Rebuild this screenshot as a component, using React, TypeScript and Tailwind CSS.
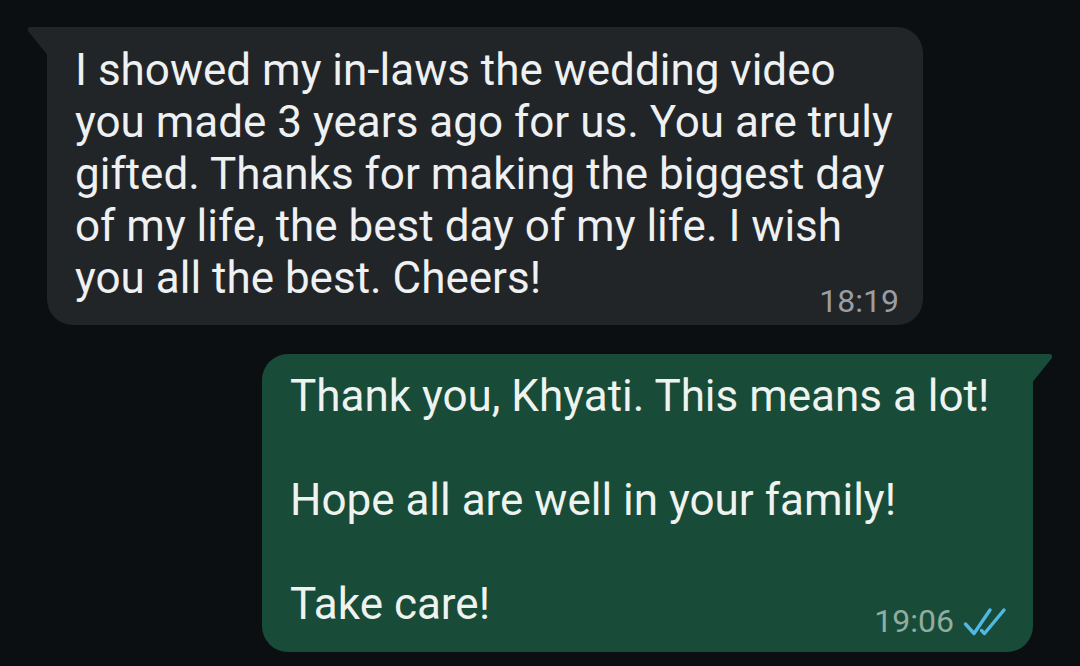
import React from "react";

const font = { fontFamily: "Roboto, 'Noto Sans', sans-serif" };

export default function App() {
  return (
    <div
      className="w-[1080px] h-[666px] bg-[#0b0f12] flex flex-col overflow-hidden"
      style={font}
    >
      {/* Incoming */}
      <div className="relative mt-[27px] ml-[47px] w-[876px]">
        <svg
          className="absolute left-[-20px] top-0"
          width="22"
          height="30"
          viewBox="0 0 22 30"
        >
          <path d="M4 0 H22 V30 L1.5 4.5 Q-0.5 0 4 0 Z" fill="#222528" />
        </svg>
        <div className="bg-[#222528] rounded-tr-[26px] rounded-br-[26px] rounded-bl-[26px] pl-[28px] pr-[24px] pt-[17px] pb-[8px] flex flex-col">
          <div className="text-[44px] leading-[52px] text-[#eef0f1] whitespace-nowrap">
            <div>I showed my in-laws the wedding video</div>
            <div>you made 3 years ago for us. You are truly</div>
            <div>gifted. Thanks for making the biggest day</div>
            <div>of my life, the best day of my life. I wish</div>
            <div>you all the best. Cheers!</div>
          </div>
          <div className="self-end -mt-[19px] text-[32px] leading-[32px] text-[#9a9ea2]">
            18:19
          </div>
        </div>
      </div>

      {/* Outgoing */}
      <div className="relative mt-[29px] ml-[262px] w-[771px]">
        <svg
          className="absolute right-[-20px] top-0"
          width="22"
          height="30"
          viewBox="0 0 22 30"
        >
          <path d="M18 0 H0 V30 L20.5 4.5 Q22.5 0 18 0 Z" fill="#184c39" />
        </svg>
        <div className="bg-[#184c39] rounded-tl-[26px] rounded-bl-[26px] rounded-br-[26px] pl-[28px] pr-[24px] pt-[16px] pb-[15px] flex flex-col">
          <div className="text-[44px] leading-[52px] text-[#eef3f0] whitespace-nowrap">
            <div>Thank you, Khyati. This means a lot!</div>
            <div>&nbsp;</div>
            <div>Hope all are well in your family!</div>
            <div>&nbsp;</div>
            <div>Take care!</div>
          </div>
          <div className="self-end -mt-[25px] mr-[-2px] flex items-center gap-[9px]">
            <span className="text-[32px] leading-[32px] text-[#93aca1]">19:06</span>
            <svg width="48" height="30" viewBox="0 0 48 30" className="mt-[2px]">
              <path
                d="M2.5 17 L11 26.5 L27 3"
                fill="none"
                stroke="#4fb8e4"
                strokeWidth="3.4"
                strokeLinecap="round"
                strokeLinejoin="round"
              />
              <path
                d="M18.5 23.5 L21.5 26.5 L41 3"
                fill="none"
                stroke="#4fb8e4"
                strokeWidth="3.4"
                strokeLinecap="round"
                strokeLinejoin="round"
              />
            </svg>
          </div>
        </div>
      </div>
    </div>
  );
}
